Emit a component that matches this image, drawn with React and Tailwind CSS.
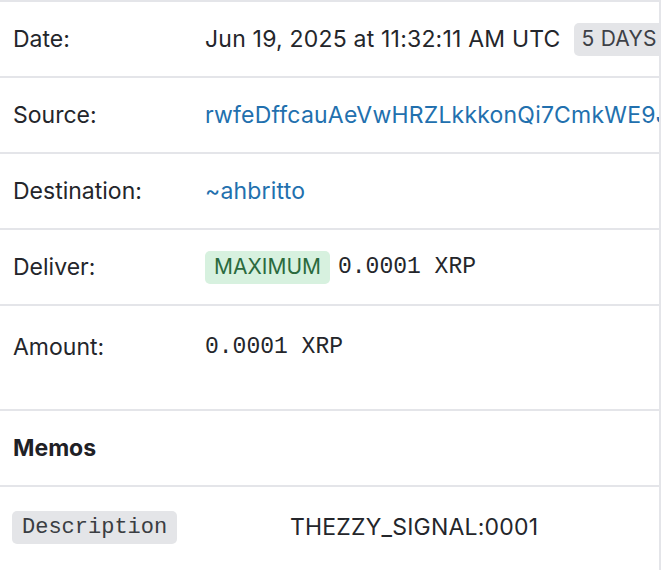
import React from 'react';

const sans = { fontFamily: 'Inter, "Liberation Sans", Arial, sans-serif' };

const Row = ({ label, children, className = '' }) => (
    <div className={`flex items-center h-[76px] border-b-2 border-[#e4e5e9] ${className}`}>
        <div className="w-[205px] shrink-0 pl-[13px] text-[23px] text-[#24262b]">{label}</div>
        <div className="flex items-center gap-[8px] whitespace-nowrap text-[23px] tracking-[0.2px] text-[#24262b]">{children}</div>
    </div>
);

const App = () => {
    return (
        <div className="w-[663px] h-[570px] bg-white overflow-hidden" style={sans}>
            <div className="w-[661px] h-full border-t-2 border-r-2 border-[#e4e5e9] overflow-hidden">
                <Row label="Date:">
                    <span>Jun 19, 2025 at 11:32:11 AM UTC</span>
                    <span className="ml-[5px] px-[8px] h-[33px] flex items-center rounded-[5px] bg-[#e4e5e8] text-[21px] text-[#3d4046]">
                        5 DAYS AGO
                    </span>
                </Row>
                <Row label="Source:">
                    <span className="text-[#2270ae]">rwfeDffcauAeVwHRZLkkkonQi7CmkWE9JSz</span>
                </Row>
                <Row label="Destination:">
                    <span className="text-[#2270ae]">~ahbritto</span>
                </Row>
                <Row label="Deliver:">
                    <span className="px-[9px] h-[33px] flex items-center rounded-[5px] bg-[#d7f1df] text-[21px] tracking-normal text-[#2b6a3e]">
                        MAXIMUM
                    </span>
                    <span className="font-['Liberation_Mono',monospace] text-[23px] tracking-normal">0.0001 XRP</span>
                </Row>

                {/* amount row is taller than the others */}
                <div className="flex items-start h-[105px] border-b-2 border-[#e4e5e9]">
                    <div className="w-[205px] shrink-0 pl-[13px] pt-[24px] text-[23px] text-[#24262b]">Amount:</div>
                    <div className="pt-[24px] text-[23px] text-[#24262b] font-['Liberation_Mono',monospace]">0.0001 XRP</div>
                </div>

                <div className="flex items-center h-[76px] border-b-2 border-[#e4e5e9] pl-[13px]">
                    <span className="text-[23px] font-bold text-[#1f2126]">Memos</span>
                </div>

                <div className="flex items-start pt-[24px]">
                    <div className="w-[290px] shrink-0 pl-[12px]">
                        <span className="inline-flex items-center h-[33px] px-[10px] rounded-[5px] bg-[#e4e5e8] text-[#3a3d42] text-[22px] font-['Liberation_Mono',monospace]">
                            Description
                        </span>
                    </div>
                    <div className="h-[33px] flex items-center text-[23px] tracking-[0.2px] text-[#24262b]">THEZZY_SIGNAL:0001</div>
                </div>
            </div>
        </div>
    );
};

export default App;
